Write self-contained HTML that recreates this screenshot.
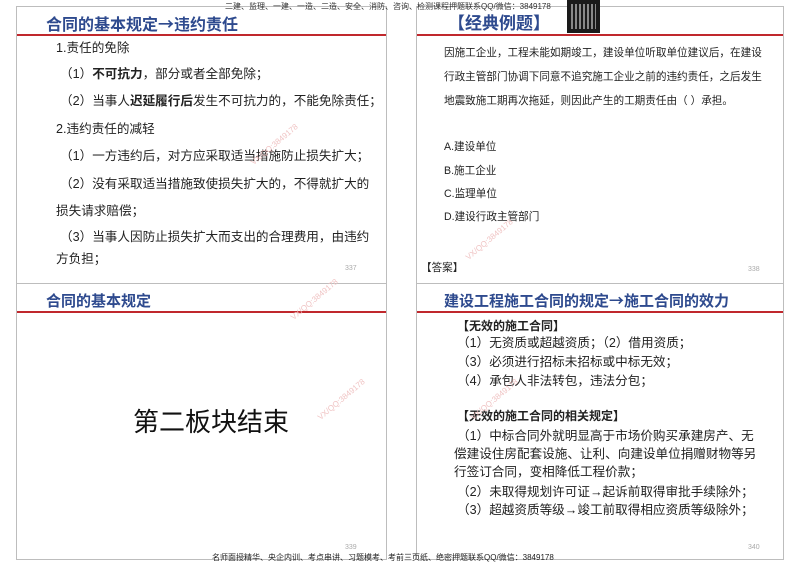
<!DOCTYPE html>
<html><head><meta charset="utf-8"><style>
*{margin:0;padding:0;box-sizing:border-box}
body{width:800px;height:566px;background:#fff;position:relative;overflow:hidden;font-family:"Liberation Sans","Noto Sans CJK SC",sans-serif;color:#222}
.p{position:absolute;border:1px solid #bdbdbd;background:#fff}
.rl{position:absolute;height:2px;background:#c0282d}
.t{position:absolute;white-space:nowrap}
.h{position:absolute;font-weight:bold;color:#2e4a8e;font-size:16px;line-height:18px;white-space:nowrap;font-family:"Noto Sans CJK SC",sans-serif}
.l{position:absolute;font-size:12.6px;white-space:nowrap;line-height:16px}
.r{position:absolute;font-size:10.6px;white-space:nowrap;line-height:14px}
.b{position:absolute;font-size:12.6px;white-space:nowrap;line-height:16px}
.n{position:absolute;font-size:7px;color:#aaa}
.wm{position:absolute;font-size:8px;color:#f0c4c4;transform:rotate(-40deg);white-space:nowrap}
</style></head><body>
<div class="p" style="left:16px;top:6px;width:371px;height:278px"></div>
<div class="p" style="left:416px;top:6px;width:368px;height:278px"></div>
<div class="p" style="left:16px;top:283px;width:371px;height:277px"></div>
<div class="p" style="left:416px;top:283px;width:368px;height:277px"></div>
<div class="rl" style="left:17px;top:34px;width:369px"></div>
<div class="rl" style="left:417px;top:34px;width:366px"></div>
<div class="rl" style="left:17px;top:311px;width:369px"></div>
<div class="rl" style="left:417px;top:311px;width:366px"></div>

<div class="t" style="left:225px;top:1px;font-size:8px;color:#333">二建、监理、一建、一造、二造、安全、消防、咨询、检测课程押题联系QQ/微信：3849178</div>
<div style="position:absolute;left:567px;top:0;width:33px;height:33px;background:#1a1a1a"></div>
<div style="position:absolute;left:571px;top:4px;width:25px;height:25px;background:repeating-linear-gradient(90deg,#888 0 2px,#1a1a1a 2px 4px)"></div>

<div class="h" style="left:46px;top:14px">合同的基本规定→违约责任</div>
<div class="l" style="left:56px;top:40px">1.责任的免除</div>
<div class="l" style="left:60px;top:66px">（1）<b>不可抗力</b>，部分或者全部免除；</div>
<div class="l" style="left:60px;top:93px">（2）当事人<b>迟延履行后</b>发生不可抗力的，不能免除责任；</div>
<div class="l" style="left:56px;top:121px">2.违约责任的减轻</div>
<div class="l" style="left:60px;top:148px">（1）一方违约后，对方应采取适当措施防止损失扩大；</div>
<div class="l" style="left:60px;top:176px">（2）没有采取适当措施致使损失扩大的，不得就扩大的</div>
<div class="l" style="left:56px;top:203px">损失请求赔偿；</div>
<div class="l" style="left:60px;top:229px">（3）当事人因防止损失扩大而支出的合理费用，由违约</div>
<div class="l" style="left:56px;top:251px">方负担；</div>
<div class="n" style="left:345px;top:265px">337</div>

<div class="h" style="left:448px;top:13px;font-size:17px">【经典例题】</div>
<div class="r" style="left:444px;top:46px">因施工企业，工程未能如期竣工，建设单位听取单位建议后，在建设</div>
<div class="r" style="left:444px;top:70px">行政主管部门协调下同意不追究施工企业之前的违约责任，之后发生</div>
<div class="r" style="left:444px;top:94px">地震致施工期再次拖延，则因此产生的工期责任由（  ）承担。</div>
<div class="r" style="left:444px;top:140px">A.建设单位</div>
<div class="r" style="left:444px;top:164px">B.施工企业</div>
<div class="r" style="left:444px;top:187px">C.监理单位</div>
<div class="r" style="left:444px;top:210px">D.建设行政主管部门</div>
<div class="r" style="left:421px;top:261px">【答案】</div>
<div class="n" style="left:748px;top:266px">338</div>

<div class="h" style="left:46px;top:292px;font-size:15px">合同的基本规定</div>
<div class="t" style="left:133px;top:402px;font-size:26px;color:#111">第二板块结束</div>
<div class="n" style="left:345px;top:544px">339</div>

<div class="h" style="left:444px;top:292px;font-size:15px">建设工程施工合同的规定→施工合同的效力</div>
<div class="b" style="left:457px;top:318px;font-weight:bold;font-size:12px">【无效的施工合同】</div>
<div class="b" style="left:457px;top:335px">（1）无资质或超越资质；（2）借用资质；</div>
<div class="b" style="left:457px;top:354px">（3）必须进行招标未招标或中标无效；</div>
<div class="b" style="left:457px;top:373px">（4）承包人非法转包，违法分包；</div>
<div class="b" style="left:457px;top:408px;font-weight:bold;font-size:12px">【无效的施工合同的相关规定】</div>
<div class="b" style="left:457px;top:428px">（1）中标合同外就明显高于市场价购买承建房产、无</div>
<div class="b" style="left:454px;top:446px">偿建设住房配套设施、让利、向建设单位捐赠财物等另</div>
<div class="b" style="left:454px;top:464px">行签订合同，变相降低工程价款；</div>
<div class="b" style="left:457px;top:484px">（2）未取得规划许可证→起诉前取得审批手续除外；</div>
<div class="b" style="left:457px;top:502px">（3）超越资质等级→竣工前取得相应资质等级除外；</div>
<div class="n" style="left:748px;top:544px">340</div>

<div class="t" style="left:212px;top:552px;font-size:8px;color:#222">名师面授精华、央企内训、考点串讲、习题模考、考前三页纸、绝密押题联系QQ/微信：3849178</div>

<div class="wm" style="left:245px;top:140px">VX/QQ:3849178</div>
<div class="wm" style="left:285px;top:295px">VX/QQ:3849178</div>
<div class="wm" style="left:460px;top:235px">VX/QQ:3849178</div>
<div class="wm" style="left:312px;top:395px">VX/QQ:3849178</div>
<div class="wm" style="left:465px;top:395px">VX/QQ:3849178</div>
</body></html>
